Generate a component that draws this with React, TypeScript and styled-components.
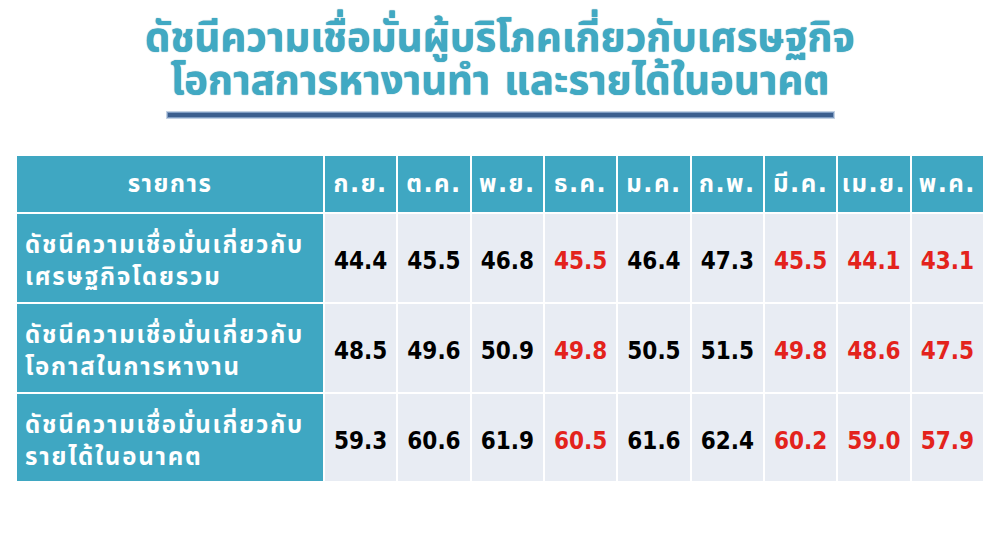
import React from "react";
import styled, { createGlobalStyle } from "styled-components";

const Global = createGlobalStyle`
  html, body { margin: 0; padding: 0; background: #ffffff; }
  body { width: 1000px; height: 536px; overflow: hidden; }
`;

const THAI = `Tahoma, "DejaVu Sans", "Noto Sans Thai", "Noto Sans", sans-serif`;

const Page = styled.div`
  width: 1000px;
  height: 536px;
  display: flex;
  flex-direction: column;
  align-items: center;
  font-family: ${THAI};
`;

const Title = styled.h1`
  margin: 16px 0 0;
  text-align: center;
  color: #41a9c3;
  font-family: ${THAI};
  font-weight: 700;
  font-size: 40px;
  line-height: 43px;
  letter-spacing: 0.1px;
  text-shadow: 0 0 1px #2f8aa3;
`;

const Rule = styled.div`
  margin-top: 10px;
  width: 665px;
  height: 4px;
  background: #3c5f8e;
  border: 1px solid #7f9cc2;
  box-shadow: 0 0 0 1px #c4d2e3;
`;

const Table = styled.div`
  margin-top: 38px;
  width: 966px;
  display: grid;
  grid-template-columns: 306px repeat(9, 1fr);
  grid-template-rows: 56px 88px 88px 87px;
  gap: 2px;
  background: #ffffff;
`;

const HeadCell = styled.div`
  background: #3fa7c2;
  color: #ffffff;
  font-weight: 700;
  font-size: 24px;
  letter-spacing: 1.5px;
  display: flex;
  align-items: center;
  justify-content: center;
  padding-top: 2px;
`;

const LabelCell = styled.div`
  background: #3fa7c2;
  color: #ffffff;
  font-weight: 700;
  font-size: 24px;
  letter-spacing: 1.8px;
  line-height: 32px;
  display: flex;
  align-items: center;
  padding: 6px 8px 0;
  white-space: pre-line;
`;

const ValueCell = styled.div<{ $down?: boolean }>`
  background: #e8ecf3;
  color: ${(p) => (p.$down ? "#e3231c" : "#000000")};
  font-family: "DejaVu Sans Condensed", "DejaVu Sans", sans-serif;
  font-weight: 700;
  font-size: 24px;
  display: flex;
  align-items: center;
  justify-content: center;
  padding-top: 6px;
`;

const months = ["ก.ย.", "ต.ค.", "พ.ย.", "ธ.ค.", "ม.ค.", "ก.พ.", "มี.ค.", "เม.ย.", "พ.ค."];
const redCols = [3, 6, 7, 8];

const rows = [
  {
    label: "ดัชนีความเชื่อมั่นเกี่ยวกับ\nเศรษฐกิจโดยรวม",
    values: ["44.4", "45.5", "46.8", "45.5", "46.4", "47.3", "45.5", "44.1", "43.1"],
  },
  {
    label: "ดัชนีความเชื่อมั่นเกี่ยวกับ\nโอกาสในการหางาน",
    values: ["48.5", "49.6", "50.9", "49.8", "50.5", "51.5", "49.8", "48.6", "47.5"],
  },
  {
    label: "ดัชนีความเชื่อมั่นเกี่ยวกับ\nรายได้ในอนาคต",
    values: ["59.3", "60.6", "61.9", "60.5", "61.6", "62.4", "60.2", "59.0", "57.9"],
  },
];

export default function App() {
  return (
    <Page>
      <Global />
      <Title>
        ดัชนีความเชื่อมั่นผู้บริโภคเกี่ยวกับเศรษฐกิจ
        <br />
        โอกาสการหางานทำ และรายได้ในอนาคต
      </Title>
      <Rule />
      <Table>
        <HeadCell>รายการ</HeadCell>
        {months.map((m) => (
          <HeadCell key={m}>{m}</HeadCell>
        ))}
        {rows.map((r) => (
          <React.Fragment key={r.label}>
            <LabelCell>{r.label}</LabelCell>
            {r.values.map((v, i) => (
              <ValueCell key={i} $down={redCols.includes(i)}>
                {v}
              </ValueCell>
            ))}
          </React.Fragment>
        ))}
      </Table>
    </Page>
  );
}
